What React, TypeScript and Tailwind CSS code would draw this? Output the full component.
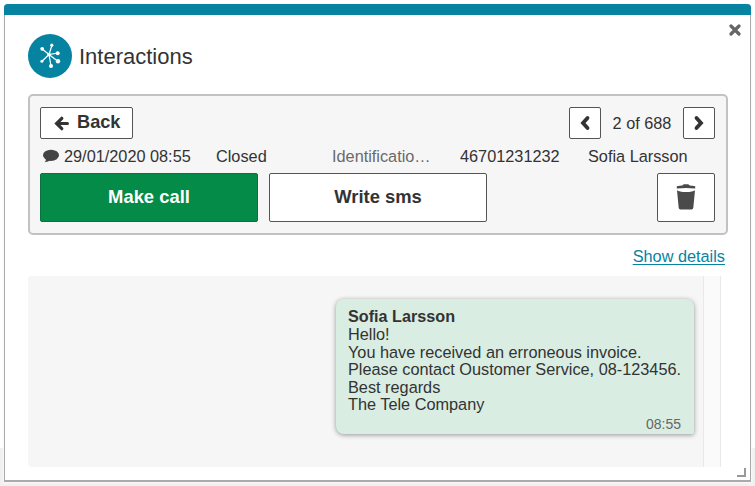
import type { ReactNode } from "react";

interface Message {
  sender: string;
  lines: string[];
  time: string;
}

const message: Message = {
  sender: "Sofia Larsson",
  lines: [
    "Hello!",
    "You have received an erroneous invoice.",
    "Please contact Oustomer Service, 08-123456.",
    "Best regards",
    "The Tele Company",
  ],
  time: "08:55",
};

function InteractionsIcon() {
  return (
    <svg className="h-[44px] w-[44px] shrink-0" viewBox="0 0 44 44">
      <circle cx="22" cy="22" r="22" fill="#0583a1" />
      <g stroke="#fff" strokeWidth="1.2">
        <path d="M21 20.5 14.2 15M21 20.5 24 11.3M21 20.5 29.5 19.2M21 20.5 29.5 27M21 20.5 23 32M21 20.5 14 27.2" />
      </g>
      <g fill="#fff">
        <circle cx="21" cy="20.5" r="1.8" />
        <circle cx="14.2" cy="14.8" r="1.9" />
        <circle cx="23.8" cy="11.2" r="1.6" />
        <circle cx="29.7" cy="19.2" r="2" />
        <circle cx="30" cy="27.2" r="2.2" />
        <circle cx="23" cy="32" r="2" />
        <circle cx="13.9" cy="27.2" r="1.5" />
      </g>
    </svg>
  );
}

function ArrowLeftIcon() {
  return (
    <svg
      className="h-[15px] w-[15px]"
      viewBox="0 0 15 15"
      fill="none"
      stroke="#333"
      strokeWidth="3.2"
      strokeLinecap="round"
    >
      <path d="M7.8 2.3 2.6 7.5l5.2 5.2M3 7.5H13.4" />
    </svg>
  );
}

function ChevronIcon({ d }: { d: string }) {
  return (
    <svg className="h-4 w-3" viewBox="0 0 12 16" fill="none" stroke="#333" strokeWidth="3.8" strokeLinecap="round">
      <path d={d} />
    </svg>
  );
}

function CommentIcon() {
  return (
    <svg className="mr-[5px] ml-[3px] h-4 w-4 shrink-0" viewBox="0 0 16 16" fill="#444">
      <ellipse cx="8" cy="7.3" rx="8" ry="5.6" />
      <path d="M3.2 10.5Q3 13 1.600 14.200 5.500 13.900 7.500 12z" />
    </svg>
  );
}

function TrashIcon() {
  return (
    <svg className="h-[26px] w-[20px]" viewBox="0 0 20 26" fill="#4a4a4a">
      <path d="M.8 2.2Q4 1.7 6.3 1.600L7 .7Q7.3.3 8 .3h4q.7 0 1 .4l.7.9Q16 1.700 19.200 2.200v2.200Q10 3.400.8 4.400z" />
      <path d="M1 6.200Q3 8 10 8T19 6.200L17.300 23.800q-.2 1.600-1.800 1.600H4.500Q2.900 25.400 2.700 23.800z" />
    </svg>
  );
}

function PagerButton({ label, children }: { label: string; children: ReactNode }) {
  return (
    <button
      aria-label={label}
      className="flex h-8 w-8 items-center justify-center rounded-[2px] border border-[#555] bg-white"
    >
      {children}
    </button>
  );
}

function Toolbar() {
  return (
    <section className="flex h-[141px] w-[700px] flex-col rounded-[5px] border-2 border-[#c2c2c2] bg-[#f6f6f6] pt-[11px] pr-[11px] pl-[10px]">
      <div className="flex items-center justify-between">
        <button className="flex h-8 w-[93px] items-center gap-[8px] rounded-[2px] border border-[#555] bg-white pl-[13px] text-[18.2px] font-bold">
          <ArrowLeftIcon />
          Back
        </button>
        <div className="flex items-center">
          <PagerButton label="Previous">
            <ChevronIcon d="M8.500 3 4 8l4.500 5" />
          </PagerButton>
          <span className="w-[82px] pt-px text-center">2 of 688</span>
          <PagerButton label="Next">
            <ChevronIcon d="M3.500 3 8 8l-4.500 5" />
          </PagerButton>
        </div>
      </div>

      <div className="flex h-[34px] items-center whitespace-nowrap">
        <CommentIcon />
        <span className="w-[152px]">29/01/2020 08:55</span>
        <span className="w-[116px]">Closed</span>
        <span className="w-[128px] text-[#6a6a6a]">Identificatio…</span>
        <span className="w-[128px]">46701231232</span>
        <span>Sofia Larsson</span>
      </div>

      <div className="flex h-[49px] text-[18.4px] font-bold">
        <button className="w-[218px] rounded-[2px] border border-[#0c7040] bg-[#048b47] pb-0.5 text-white">
          Make call
        </button>
        <button className="ml-[11px] w-[218px] rounded-[2px] border border-[#555] bg-white pb-0.5">Write sms</button>
        <button
          aria-label="Delete"
          className="ml-auto flex w-[58px] items-center justify-center rounded-[2px] border border-[#555] bg-white pb-0.5"
        >
          <TrashIcon />
        </button>
      </div>
    </section>
  );
}

function MessageBubble({ sender, lines, time }: Message) {
  return (
    <article className="flex h-[135px] w-[358px] flex-col rounded-t-[8px] rounded-bl-[8px] rounded-br-[2px] bg-[#d9ede2] px-[12px] pt-[8px] leading-[17.5px] shadow-[0_1px_5px_rgba(0,0,0,0.4)]">
      <h2 className="mb-px text-[16.2px] leading-[18px] font-bold">{sender}</h2>
      {lines.map((line) => (
        <p key={line} className="text-[16.3px] whitespace-nowrap">
          {line}
        </p>
      ))}
      <time className="self-end pt-[2px] pr-px text-[14px] text-[#666]">{time}</time>
    </article>
  );
}

export default function App() {
  return (
    <div className="h-[486px] w-[755px] bg-[linear-gradient(#fff_448px,#f0f0f0_448px)] px-1 pt-1 font-['Liberation_Sans',Arial,sans-serif] text-[16.3px] text-[#333]">
      <main className="relative flex h-[478px] w-[747px] flex-col rounded-t-[4px] border border-t-0 border-b-2 border-[#aaa] bg-white pl-[23px] shadow-[0_0_2px_1px_#fafafa]">
        <div className="-mr-px -ml-[24px] h-[11px] shrink-0 rounded-t-[4px] bg-[#0583a1]" />
        <button aria-label="Close" className="absolute top-[20px] right-[9px]">
          <svg className="h-3 w-3" viewBox="0 0 12 12" stroke="#666" strokeWidth="3.2" strokeLinecap="round">
            <path d="m2 2 8 8M10 2 2 10" />
          </svg>
        </button>

        <header className="flex h-[79px] items-center gap-[7px] pt-[3px]">
          <InteractionsIcon />
          <h1 className="text-[22px]">Interactions</h1>
        </header>

        <Toolbar />

        <div className="flex h-[41px] w-[697px] items-center justify-end pt-0.5">
          <a href="#" className="text-[#0583a1] underline underline-offset-2">
            Show details
          </a>
        </div>

        <section className="flex h-[191px] w-[693px] rounded-[4px] bg-[#f6f6f6]">
          <div className="flex flex-1 justify-end pt-[23px] pr-[9px]">
            <MessageBubble {...message} />
          </div>
          <div className="w-[18px] border-x border-[#e9e9e9] bg-[#fafafa]" />
        </section>

        <svg className="absolute right-[4px] bottom-[3px] h-[9px] w-[9px]" viewBox="0 0 9 9" fill="none" stroke="#999" strokeWidth="2">
          <path d="M8 0v8H0" />
        </svg>
      </main>
    </div>
  );
}
